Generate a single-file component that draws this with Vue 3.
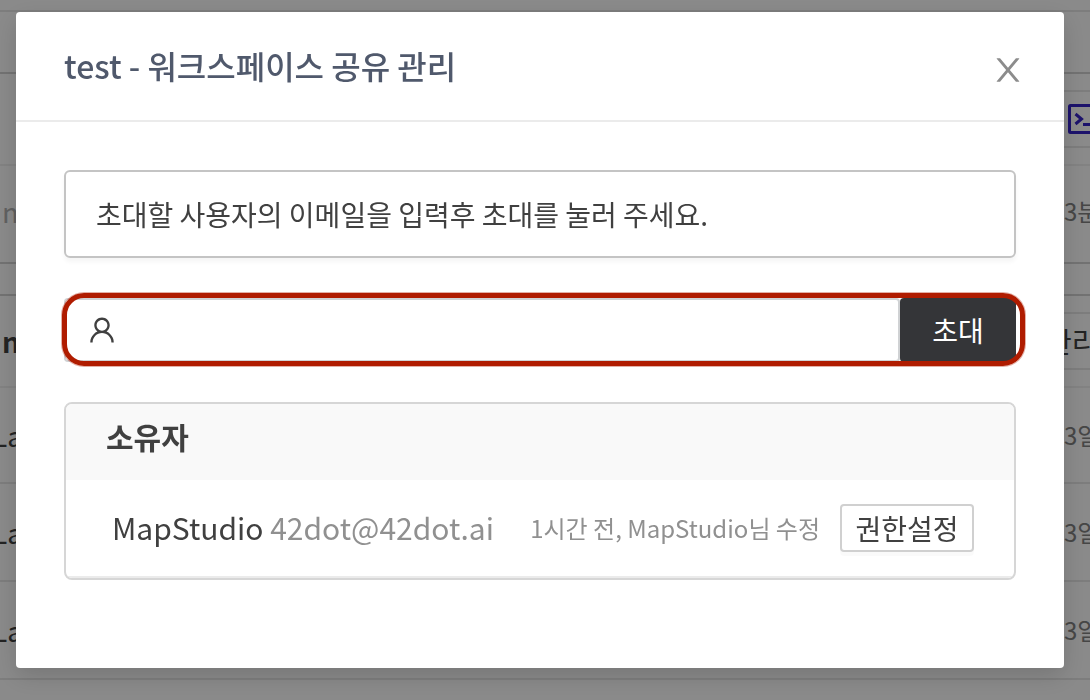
<script setup>
import { ref } from 'vue'

const email = ref('')
const rows = [
  { id: 1, name: 'La', time: '3일' },
  { id: 2, name: 'La', time: '3일' },
  { id: 3, name: 'La', time: '3일' },
]
</script>

<template>
  <div class="app">
    <main class="page">
      <div class="strip"></div>
      <div class="toolbar"></div>
      <div class="bar bar-top">
        <button class="tool" type="button" aria-label="Terminal">
          <svg class="terminal" viewBox="0 0 32 32" aria-hidden="true">
            <rect x="1.5" y="2.5" width="29" height="27" rx="1" />
            <path d="M7.5 11l6 5-6 5M15 21.5h9" />
          </svg>
        </button>
      </div>
      <div class="line meta">
        <span>m</span>
        <span class="time">3분</span>
      </div>
      <div class="gap"></div>
      <div class="bar">
        <strong class="heading">n</strong>
        <button class="manage" type="button">관리</button>
      </div>
      <div v-for="row in rows" :key="row.id" class="line item">
        <span class="name">{{ row.name }}</span>
        <span class="time">{{ row.time }}</span>
      </div>
    </main>

    <div class="mask">
      <section class="modal" role="dialog" aria-modal="true" aria-labelledby="dialog-title">
        <header class="head">
          <h1 id="dialog-title">test - 워크스페이스 공유 관리</h1>
          <button class="close" type="button" aria-label="닫기">
            <svg viewBox="64 64 896 896" aria-hidden="true">
              <path d="M563.8 512l262.5-312.9c4.4-5.2.7-13.1-6.1-13.1h-79.8c-4.7 0-9.2 2.1-12.3 5.7L511.6 449.8 295.1 191.7c-3-3.6-7.5-5.7-12.3-5.7H203c-6.8 0-10.5 7.9-6.1 13.1L459.4 512 196.9 824.9A7.95 7.95 0 0 0 203 838h79.8c4.7 0 9.2-2.1 12.3-5.7l216.5-258.1 216.5 258.1c3 3.6 7.5 5.7 12.3 5.7h79.8c6.8 0 10.5-7.9 6.1-13.1L563.8 512z" />
            </svg>
          </button>
        </header>

        <div class="body">
          <p class="info">초대할 사용자의 이메일을 입력후 초대를 눌러 주세요.</p>

          <form class="invite" @submit.prevent>
            <label class="field">
              <svg viewBox="64 64 896 896" aria-hidden="true">
                <path d="M858.5 763.6a374 374 0 0 0-80.6-119.5 375.63 375.63 0 0 0-119.5-80.6c-.4-.2-.8-.3-1.2-.5C719.5 518 760 444.7 760 362c0-137-111-248-248-248S264 225 264 362c0 82.7 40.5 156 102.8 201.1-.4.2-.8.3-1.2.5-44.8 18.9-85 46-119.5 80.6a375.63 375.63 0 0 0-80.6 119.5A371.7 371.7 0 0 0 136 901.8a8 8 0 0 0 8 8.2h60c4.4 0 7.9-3.5 8-7.8 2-77.2 33-149.5 87.8-204.3 56.7-56.7 132-87.9 212.2-87.9s155.5 31.2 212.2 87.9C779 752.7 810 825 812 902.2c.1 4.4 3.6 7.8 8 7.8h60a8 8 0 0 0 8-8.2c-1-47.8-10.9-94.3-29.5-138.2zM512 534c-45.9 0-89.1-17.9-121.6-50.4S340 407.9 340 362c0-45.9 17.9-89.1 50.4-121.6S466.1 190 512 190s89.1 17.9 121.6 50.4S684 316.1 684 362c0 45.9-17.9 89.1-50.4 121.6S557.9 534 512 534z" />
              </svg>
              <input v-model="email" type="email" aria-label="이메일" />
            </label>
            <button class="submit" type="submit">초대</button>
            <span class="marker"></span>
          </form>

          <section class="members">
            <h2>소유자</h2>
            <div class="member">
              <span class="who">MapStudio <span class="mail">42dot@42dot.ai</span></span>
              <span class="edited">1시간 전, MapStudio님 수정</span>
              <button class="perm" type="button">권한설정</button>
            </div>
          </section>
        </div>
      </section>
    </div>
  </div>
</template>

<style>
body {
  margin: 0;
  overflow: hidden;
}
</style>

<style scoped>
* {
  box-sizing: border-box;
}

.app {
  min-height: 100vh;
  background: #fbfbfb;
  color: #404040;
  font-family: "Noto Sans CJK KR", "Noto Sans", sans-serif;
  font-size: 28px;
  line-height: 40px;
}

button {
  padding: 0;
  font: inherit;
  color: inherit;
  background: none;
  border: 0;
  cursor: pointer;
}

.page {
  overflow: hidden;
}

.strip {
  height: 12px;
  border-bottom: 2px solid #e4e4e4;
}

.toolbar {
  height: 62px;
  border-bottom: 2px solid #d0d0d0;
}

.bar,
.line {
  display: flex;
  align-items: center;
  justify-content: space-between;
}

.bar {
  height: 92px;
  border-bottom: 2px solid #ededed;
}

.bar-top {
  justify-content: flex-end;
}

.tool {
  display: flex;
  align-items: center;
  width: 44px;
  height: 58px;
  padding-left: 22px;
  border-top: 2px solid #e4e4e4;
  border-bottom: 2px solid #e4e4e4;
}

.terminal {
  flex: none;
  width: 32px;
  height: 32px;
  fill: none;
  stroke: #3422c4;
  stroke-width: 3;
}

.line {
  height: 98px;
  padding-left: 2px;
  border-bottom: 2px solid #e4e4e4;
}

.meta {
  padding-bottom: 6px;
  color: #b0b0b0;
  border-bottom-color: #d0d0d0;
}

.time {
  width: 26px;
  color: #808080;
  font-size: 24px;
  white-space: nowrap;
}

.gap {
  height: 32px;
  border-bottom: 2px solid #d0d0d0;
}

.heading {
  padding-left: 2px;
}

.manage {
  width: 44px;
  height: 58px;
  border-top: 2px solid #e4e4e4;
  border-bottom: 2px solid #e4e4e4;
  white-space: nowrap;
}

.bar + .item {
  height: 96px;
}

.name {
  margin-left: -10px;
}

.mask {
  position: fixed;
  inset: 0;
  padding: 12px 26px 32px 16px;
  background: rgba(0, 0, 0, 0.45);
}

.modal {
  background: #fff;
  border-radius: 4px;
  box-shadow: 0 8px 24px rgba(0, 0, 0, 0.15);
}

.head {
  display: flex;
  align-items: flex-end;
  justify-content: space-between;
  padding: 30px 40px 32px 48px;
  border-bottom: 2px solid #ebebeb;
}

h1 {
  margin: 0;
  color: #50596c;
  font-size: 32px;
  font-weight: 500;
  line-height: 46px;
}

.close {
  display: flex;
  padding-bottom: 2px;
  color: #8c8c8c;
}

.close svg {
  width: 32px;
  height: 32px;
  fill: currentColor;
}

.body {
  display: flex;
  flex-direction: column;
  gap: 40px;
  padding: 48px 48px 88px;
}

.info {
  margin: 0;
  padding: 22px 30px;
  border: 2px solid #c4c4c4;
  border-radius: 6px;
  box-shadow: 0 4px 4px rgba(0, 0, 0, 0.04);
}

.invite {
  position: relative;
  display: flex;
  height: 64px;
}

.field {
  display: flex;
  flex: 1;
  align-items: center;
  gap: 12px;
  padding: 0 22px;
  border: 2px solid #d0d2d4;
  border-radius: 4px;
}

.field svg {
  flex: none;
  width: 28px;
  height: 28px;
  fill: #404040;
}

.field input {
  flex: 1;
  min-width: 0;
  padding: 0;
  font: inherit;
  color: inherit;
  background: none;
  border: 0;
  outline: 0;
}

.submit {
  width: 116px;
  color: #fff;
  background: #343538;
  border-radius: 4px;
}

.marker {
  position: absolute;
  inset: -5px -9px -4px -2px;
  border: 5px solid #b01c00;
  border-radius: 22px;
  box-shadow: 0 0 0 1px rgba(176, 28, 0, 0.35);
  pointer-events: none;
}

.members {
  border: 2px solid #d6d6d6;
  border-radius: 8px;
  overflow: hidden;
}

h2 {
  margin: 0;
  padding: 12px 40px 24px;
  background: #f9f9f9;
  font-size: 30px;
  font-weight: 700;
  line-height: 40px;
}

.member {
  display: flex;
  align-items: center;
  padding: 24px 40px 24px 46px;
  border-bottom: 2px solid #ebebeb;
}

.who {
  flex: 1;
  padding-bottom: 2px;
  font-size: 30px;
  white-space: nowrap;
}

.mail,
.edited {
  color: #909090;
}

.edited {
  margin-right: 20px;
  font-size: 24px;
  white-space: nowrap;
}

.perm {
  width: 134px;
  height: 48px;
  border: 2px solid #d0d0d0;
  border-radius: 4px;
  box-shadow: 0 4px 0 rgba(0, 0, 0, 0.02);
  line-height: 40px;
}
</style>
